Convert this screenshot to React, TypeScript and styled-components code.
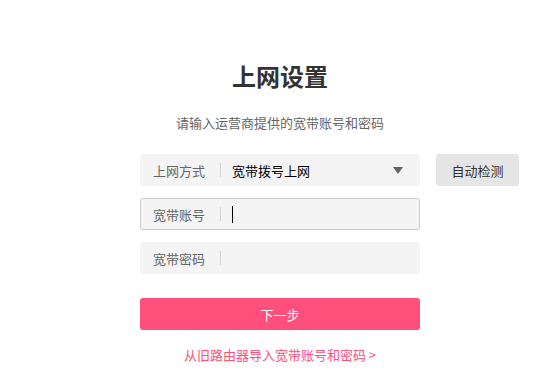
import React from "react";
import styled, { createGlobalStyle } from "styled-components";

const Global = createGlobalStyle`
  html, body {
    margin: 0;
    padding: 0;
    background: #fff;
    font-family: "Microsoft YaHei", "Noto Sans CJK SC", "Liberation Sans", sans-serif;
  }
`;

const Page = styled.div`
  width: 553px;
  height: 392px;
  display: flex;
  flex-direction: column;
  align-items: center;
  box-sizing: border-box;
  padding: 60px 0 0 7px;
  overflow: hidden;
`;

const Title = styled.h2`
  margin: 0;
  font-size: 24px;
  font-weight: bold;
  color: #333;
  line-height: 32px;
`;

const Subtitle = styled.p`
  margin: 22px 0 0;
  font-size: 13px;
  color: #666;
  line-height: 18px;
`;

const Form = styled.div`
  margin-top: 22px;
  width: 280px;
  display: flex;
  flex-direction: column;
  gap: 12px;
`;

const FieldLine = styled.div`
  display: flex;
  align-items: center;
  gap: 16px;
`;

const Field = styled.div<{ $focus?: boolean }>`
  width: 280px;
  height: 32px;
  flex-shrink: 0;
  box-sizing: border-box;
  display: flex;
  align-items: center;
  background: #f4f4f4;
  border-radius: 3px;
  border: 1px solid ${(p) => (p.$focus ? "#cccccc" : "#f4f4f4")};
  padding: 0 12px;
  font-size: 13px;
`;

const Label = styled.span`
  color: #666;
  width: 52px;
  flex-shrink: 0;
`;

const Sep = styled.span`
  width: 1px;
  height: 14px;
  background: #d4d4d4;
  margin: 0 11px 0 15px;
`;

const Value = styled.span`
  flex: 1;
  color: #000;
`;

const Caret = styled.span`
  width: 1px;
  height: 17px;
  background: #000;
`;

const Triangle = styled.span`
  width: 0;
  height: 0;
  border-left: 5px solid transparent;
  border-right: 5px solid transparent;
  border-top: 7px solid #666;
  margin-right: 4px;
`;

const DetectButton = styled.button`
  width: 83px;
  height: 32px;
  flex-shrink: 0;
  border: none;
  border-radius: 3px;
  background: #e5e5e5;
  color: #333;
  font-family: inherit;
  font-size: 13px;
  padding: 0;
`;

const Submit = styled.button`
  margin-top: 24px;
  width: 280px;
  height: 32px;
  border: none;
  border-radius: 3px;
  background: #ff4f7b;
  color: #fff;
  font-family: inherit;
  font-size: 13px;
  padding: 0;
`;

const Import = styled.a`
  margin-top: 15px;
  font-size: 13px;
  color: #ff4f7b;
  text-decoration: none;
  align-self: center;
`;

const Wrap = styled.div`
  display: flex;
  flex-direction: column;
  width: 280px;
`;

export default function App() {
  return (
    <Page>
      <Global />
      <Title>上网设置</Title>
      <Subtitle>请输入运营商提供的宽带账号和密码</Subtitle>
      <Wrap>
        <Form>
          <FieldLine>
            <Field>
              <Label>上网方式</Label>
              <Sep />
              <Value>宽带拨号上网</Value>
              <Triangle />
            </Field>
            <DetectButton>自动检测</DetectButton>
          </FieldLine>
          <Field $focus>
            <Label>宽带账号</Label>
            <Sep />
            <Caret />
          </Field>
          <Field>
            <Label>宽带密码</Label>
            <Sep />
          </Field>
        </Form>
        <Submit>下一步</Submit>
        <Import href="#">从旧路由器导入宽带账号和密码 &gt;</Import>
      </Wrap>
    </Page>
  );
}
